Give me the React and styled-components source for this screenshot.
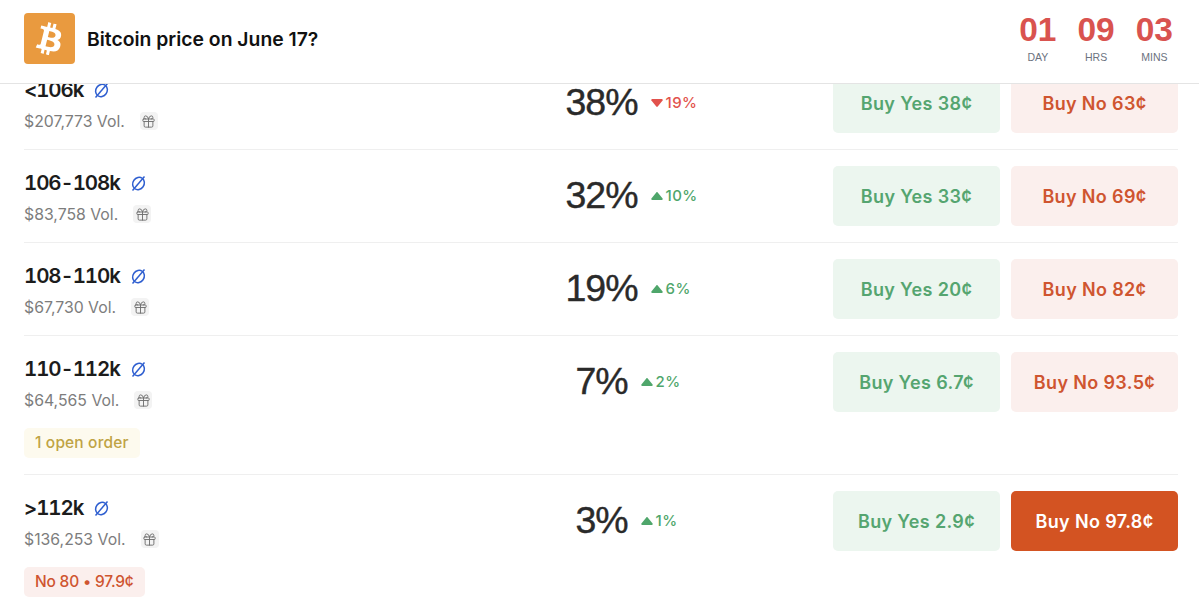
import React from "react";
import styled, { createGlobalStyle } from "styled-components";
import { FaBtc } from "react-icons/fa";
import { Gift } from "lucide-react";

const GlobalStyle = createGlobalStyle`
  html, body {
    margin: 0;
    padding: 0;
    height: 100%;
    background: #fff;
    overflow: hidden;
  }
  body {
    font-family: Inter, "Liberation Sans", sans-serif;
    color: #1f1f1f;
  }
`;

const Page = styled.div`
  display: flex;
  flex-direction: column;
  height: 597px;
  width: 1199px;
  overflow: hidden;
`;

const Header = styled.header`
  display: flex;
  align-items: flex-start;
  justify-content: space-between;
  height: 83px;
  flex: none;
  padding: 0 26px 0 24px;
  border-bottom: 1px solid #e4e4e4;
`;

const Brand = styled.div`
  display: flex;
  align-items: center;
  gap: 12px;
  margin-top: 13px;
`;

const Logo = styled.div`
  display: flex;
  align-items: center;
  justify-content: center;
  width: 51px;
  height: 51px;
  border-radius: 4px;
  background: #e99a3f;
  color: #fff;
  font-size: 32px;

  svg {
    transform: rotate(14deg);
  }
`;

const Title = styled.h1`
  margin: 0;
  font-size: 19.35px;
  font-weight: 600;
  color: #111;
`;

const Countdown = styled.div`
  display: flex;
  gap: 21px;
  margin-top: 12px;
`;

const Unit = styled.div`
  display: flex;
  flex-direction: column;
  align-items: center;
  font-family: "Liberation Sans", Arial, sans-serif;
`;

const UnitValue = styled.span`
  font-size: 33.5px;
  line-height: 36px;
  font-weight: 700;
  color: #d9534f;
`;

const UnitLabel = styled.span`
  font-size: 10.5px;
  line-height: 14px;
  margin-top: 2px;
  color: #6b7280;
`;

const Viewport = styled.div`
  flex: 1;
  overflow: hidden;
`;

const List = styled.div`
  margin-top: -27px;
  padding: 0 21px 0 24px;
`;

const Row = styled.div`
  display: flex;
  align-items: flex-start;
  padding: 16px 0;
  border-bottom: 1px solid #efefef;

  &:last-child {
    border-bottom: none;
  }
`;

const Info = styled.div`
  display: flex;
  flex-direction: column;
  width: 346px;
  flex: none;
`;

const NameLine = styled.div`
  display: flex;
  align-items: center;
  gap: 10px;
  height: 28px;
  margin-top: 3px;
`;

const Name = styled.span`
  font-size: 20.5px;
  font-weight: 600;
  font-variant-numeric: tabular-nums;
  letter-spacing: -1.1px;
  line-height: 1;
  color: #1c1c1c;
`;

const VolumeLine = styled.div`
  display: flex;
  align-items: center;
  gap: 15px;
  height: 24px;
  margin-top: 5px;
`;

const Volume = styled.span`
  font-size: 15.8px;
  color: #7d7d7d;
`;

const GiftBadge = styled.span`
  display: flex;
  align-items: center;
  justify-content: center;
  width: 18px;
  height: 18px;
  border-radius: 4px;
  background: #f3f3f3;
  color: #6f6f6f;
`;

const Tag = styled.span`
  align-self: flex-start;
  margin-top: 16px;
  padding: 0 11px;
  height: 30px;
  line-height: 30px;
  border-radius: 5px;
  font-size: 15.5px;
  font-weight: 500;
  letter-spacing: ${(p) => (p.$tone === "no" ? "-0.2px" : "0.15px")};
  color: ${(p) => (p.$tone === "no" ? "#cf5530" : "#bfa344")};
  background: ${(p) => (p.$tone === "no" ? "#fbefed" : "#fdfaee")};
`;

const Odds = styled.div`
  flex: 1;
  display: grid;
  grid-template-columns: 1fr auto 1fr;
  align-items: center;
  column-gap: 13px;
  height: 60px;
`;

const Percent = styled.span`
  grid-column: 2;
  font-family: "Liberation Sans", Arial, sans-serif;
  font-size: 37.5px;
  line-height: 1;
  letter-spacing: -1px;
  -webkit-text-stroke: 0.4px #2a2a2a;
  color: #2a2a2a;
  margin-top: -1px;
`;

const Delta = styled.span`
  grid-column: 3;
  display: flex;
  align-items: center;
  gap: 3px;
  font-size: 15px;
  font-weight: 500;
  letter-spacing: 0.4px;
  color: ${(p) => (p.$down ? "#e2524c" : "#4fa66b")};
  margin-top: -1px;
`;

const Actions = styled.div`
  display: flex;
  gap: 11px;
  flex: none;
`;

const Buy = styled.button`
  width: 167px;
  height: 60px;
  border: none;
  border-radius: 5px;
  font-family: Inter, "Liberation Sans", sans-serif;
  font-size: 18px;
  font-weight: 600;
  letter-spacing: 0.35px;
  color: ${(p) => (p.$kind === "yes" ? "#55a570" : p.$active ? "#fff" : "#cf5530")};
  background: ${(p) => (p.$kind === "yes" ? "#ecf6ef" : p.$active ? "#d35322" : "#fbefed")};
`;

const TokenIcon = () => (
  <svg width="17" height="17" viewBox="0 0 17 17" fill="none" stroke="#2f5fd0" strokeWidth="1.5">
    <ellipse cx="8.5" cy="8.5" rx="5.6" ry="6.4" transform="rotate(35 8.5 8.5)" />
    <path d="M2.5 15.5L14.5 1.5" />
  </svg>
);

const Triangle = ({ down }) => (
  <svg width="12" height="10" viewBox="0 0 12 10" fill="currentColor">
    {down ? (
      <path d="M1.2 1h9.6c.8 0 1.2.8.8 1.4L6.7 8.6c-.4.5-1 .5-1.4 0L.4 2.4C0 1.8.4 1 1.2 1z" />
    ) : (
      <path d="M1.2 9h9.6c.8 0 1.2-.8.8-1.4L6.7 1.4c-.4-.5-1-.5-1.4 0L.4 7.6C0 8.2.4 9 1.2 9z" />
    )}
  </svg>
);

const markets = [
  { name: "<106k", vol: "$207,773", pct: "38%", delta: "19%", down: true, yes: "38¢", no: "63¢" },
  { name: "106-108k", vol: "$83,758", pct: "32%", delta: "10%", yes: "33¢", no: "69¢" },
  { name: "108-110k", vol: "$67,730", pct: "19%", delta: "6%", yes: "20¢", no: "82¢" },
  { name: "110-112k", vol: "$64,565", pct: "7%", delta: "2%", yes: "6.7¢", no: "93.5¢", tag: "1 open order" },
  { name: ">112k", vol: "$136,253", pct: "3%", delta: "1%", yes: "2.9¢", no: "97.8¢", tag: "No 80 • 97.9¢", tone: "no", active: true },
];

const countdown = [
  ["01", "DAY"],
  ["09", "HRS"],
  ["03", "MINS"],
];

export default function App() {
  return (
    <Page>
      <GlobalStyle />
      <Header>
        <Brand>
          <Logo>
            <FaBtc />
          </Logo>
          <Title>Bitcoin price on June 17?</Title>
        </Brand>
        <Countdown>
          {countdown.map(([value, label]) => (
            <Unit key={label}>
              <UnitValue>{value}</UnitValue>
              <UnitLabel>{label}</UnitLabel>
            </Unit>
          ))}
        </Countdown>
      </Header>
      <Viewport>
        <List>
          {markets.map((m) => (
            <Row key={m.name}>
              <Info>
                <NameLine>
                  <Name>{m.name}</Name>
                  <TokenIcon />
                </NameLine>
                <VolumeLine>
                  <Volume>{m.vol} Vol.</Volume>
                  <GiftBadge>
                    <Gift size={15} strokeWidth={1.5} />
                  </GiftBadge>
                </VolumeLine>
                {m.tag && <Tag $tone={m.tone}>{m.tag}</Tag>}
              </Info>
              <Odds>
                <Percent>{m.pct}</Percent>
                <Delta $down={m.down}>
                  <Triangle down={m.down} />
                  {m.delta}
                </Delta>
              </Odds>
              <Actions>
                <Buy $kind="yes">Buy Yes {m.yes}</Buy>
                <Buy $kind="no" $active={m.active}>Buy No {m.no}</Buy>
              </Actions>
            </Row>
          ))}
        </List>
      </Viewport>
    </Page>
  );
}
